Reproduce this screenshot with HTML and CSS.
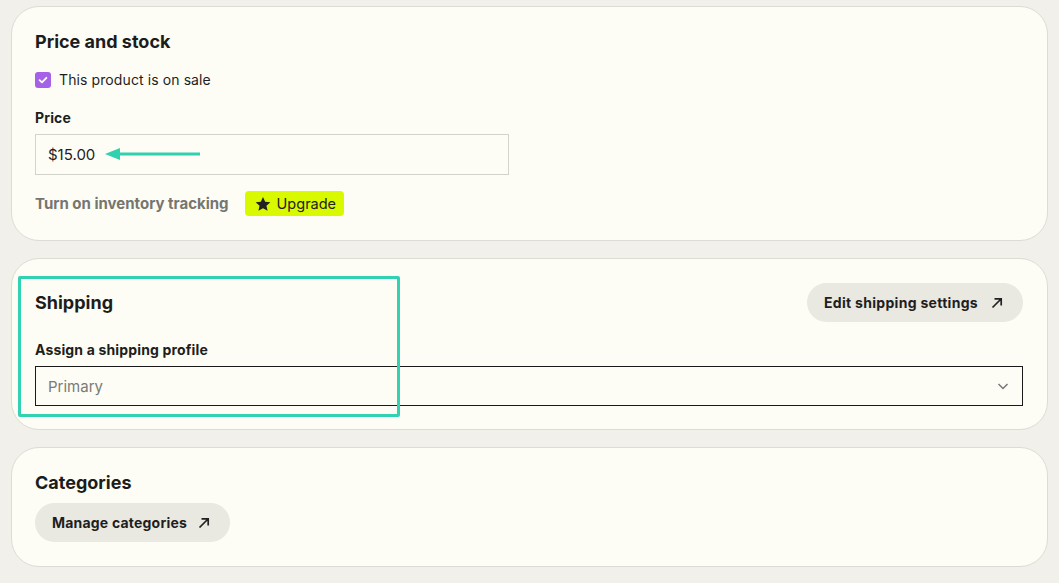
FILE: index.html
```html
<!DOCTYPE html>
<html lang="en">
<head>
<meta charset="utf-8">
<title>Listing editor</title>
<link rel="stylesheet" href="styles.css">
</head>
<body>
<main class="page">
  <section class="card">
    <h2 class="card-title">Price and stock</h2>
    <label class="check-row">
      <span class="checkbox">
        <svg width="10" height="10" viewBox="0 0 10 10"><path d="M1.6 5.2 L4 7.4 L8.4 2.8" fill="none" stroke="#fff" stroke-width="1.8" stroke-linecap="round" stroke-linejoin="round"/></svg>
      </span>
      <span>This product is on sale</span>
    </label>
    <div class="field">
      <div class="field-label">Price</div>
      <div class="input price-input">
        <span>$15.00</span>
        <svg class="annot-arrow" width="96" height="14" viewBox="0 0 96 14"><path d="M0 7 L15 1 L15 13 Z" fill="#2fd1b0"/><path d="M13 7 H95" stroke="#2fd1b0" stroke-width="3"/></svg>
      </div>
    </div>
    <div class="inventory-row">
      <span class="muted-link">Turn on inventory tracking</span>
      <span class="upgrade">
        <svg width="18" height="18" viewBox="0 0 24 24"><path d="M12 2.5 L14.9 8.9 L21.8 9.6 L16.6 14.2 L18.1 21 L12 17.5 L5.9 21 L7.4 14.2 L2.2 9.6 L9.1 8.9 Z" fill="#222"/></svg>
        Upgrade
      </span>
    </div>
  </section>

  <section class="card shipping">
    <div class="card-head">
      <h2 class="card-title">Shipping</h2>
      <button class="pill-btn">Edit shipping settings
        <svg width="14" height="14" viewBox="0 0 14 14"><path d="M2.5 11.5 L11 3 M4.5 2.8 H11.2 V9.5" fill="none" stroke="#222" stroke-width="1.7"/></svg>
      </button>
    </div>
    <div class="field">
      <div class="field-label">Assign a shipping profile</div>
      <div class="input select">
        <span class="placeholder">Primary</span>
        <svg width="14" height="14" viewBox="0 0 14 14"><path d="M2.5 5 L7 9.5 L11.5 5" fill="none" stroke="#777" stroke-width="1.5"/></svg>
      </div>
    </div>
    <div class="highlight"></div>
  </section>

  <section class="card categories">
    <h2 class="card-title">Categories</h2>
    <button class="pill-btn">Manage categories
      <svg width="14" height="14" viewBox="0 0 14 14"><path d="M2.5 11.5 L11 3 M4.5 2.8 H11.2 V9.5" fill="none" stroke="#222" stroke-width="1.7"/></svg>
    </button>
  </section>
</main>
</body>
</html>
```
FILE: styles.css
```css
* { box-sizing: border-box; }
html, body { margin: 0; padding: 0; }
body {
  background: #f1f0ea;
  font-family: Inter, "Noto Sans", "Liberation Sans", sans-serif;
  color: #1e1e1e;
  width: 1059px;
  height: 583px;
  overflow: hidden;
}
.page {
  padding: 6px 11px 0 11px;
  display: flex;
  flex-direction: column;
  gap: 17px;
}
.card {
  position: relative;
  background: #fdfdf5;
  border: 1px solid #dcdbd4;
  border-radius: 28px;
  padding: 24px 24px 24px 23px;
}
.card-title {
  margin: 0;
  font-size: 18px;
  line-height: 22px;
  font-weight: 700;
  letter-spacing: 0;
  color: #1c1c1c;
}
.check-row {
  margin-top: 17px;
  display: flex;
  align-items: center;
  gap: 8px;
  font-size: 14px;
  line-height: 20px;
  letter-spacing: 0.1px;
}
.checkbox {
  width: 16px;
  height: 16px;
  border-radius: 3px;
  background: #a562e8;
  display: flex;
  align-items: center;
  justify-content: center;
}
.field { margin-top: 18px; }
.field-label {
  font-size: 14px;
  line-height: 20px;
  font-weight: 700;
  letter-spacing: 0.15px;
  margin-bottom: 6px;
}
.input {
  height: 40px;
  display: flex;
  align-items: center;
  padding: 0 12px;
  font-size: 15px;
  background: #fdfdf5;
}
.price-input {
  width: 474px;
  height: 41px;
  border: 1px solid #d3d2cb;
  position: relative;
  color: #1e1e1e;
}
.annot-arrow {
  position: absolute;
  left: 69px;
  top: 12px;
}
.inventory-row {
  margin-top: 16px;
  display: flex;
  align-items: center;
  gap: 16px;
}
.muted-link {
  font-size: 15px;
  font-weight: 700;
  color: #76756f;
}
.upgrade {
  display: inline-flex;
  align-items: center;
  gap: 5px;
  height: 25px;
  padding: 0 8px 0 9px;
  background: #d9f900;
  border-radius: 4px;
  font-size: 14.5px;
  color: #222;
}
.card-head {
  display: flex;
  align-items: center;
  justify-content: space-between;
}
.pill-btn {
  display: inline-flex;
  align-items: center;
  gap: 12px;
  height: 39px;
  padding: 0 19px 0 17px;
  border: none;
  border-radius: 20px;
  background: #e9e8e1;
  font-family: inherit;
  font-size: 14px;
  font-weight: 700;
  letter-spacing: 0.3px;
  color: #1e1e1e;
}
.shipping { padding-bottom: 23px; }
.shipping .field { margin-top: 18px; }
.select {
  border: 1px solid #1a1a1a;
  justify-content: space-between;
  padding-right: 12px;
}
.placeholder { color: #7a7a76; }
.highlight {
  position: absolute;
  left: 6px;
  top: 17px;
  width: 382px;
  height: 141px;
  border: 3px solid #30d2b1;
  border-radius: 2px;
  pointer-events: none;
}
.categories .pill-btn {
  margin-top: 9px;
  gap: 10px;
  padding-right: 19px;
  letter-spacing: 0.2px;
}
```
